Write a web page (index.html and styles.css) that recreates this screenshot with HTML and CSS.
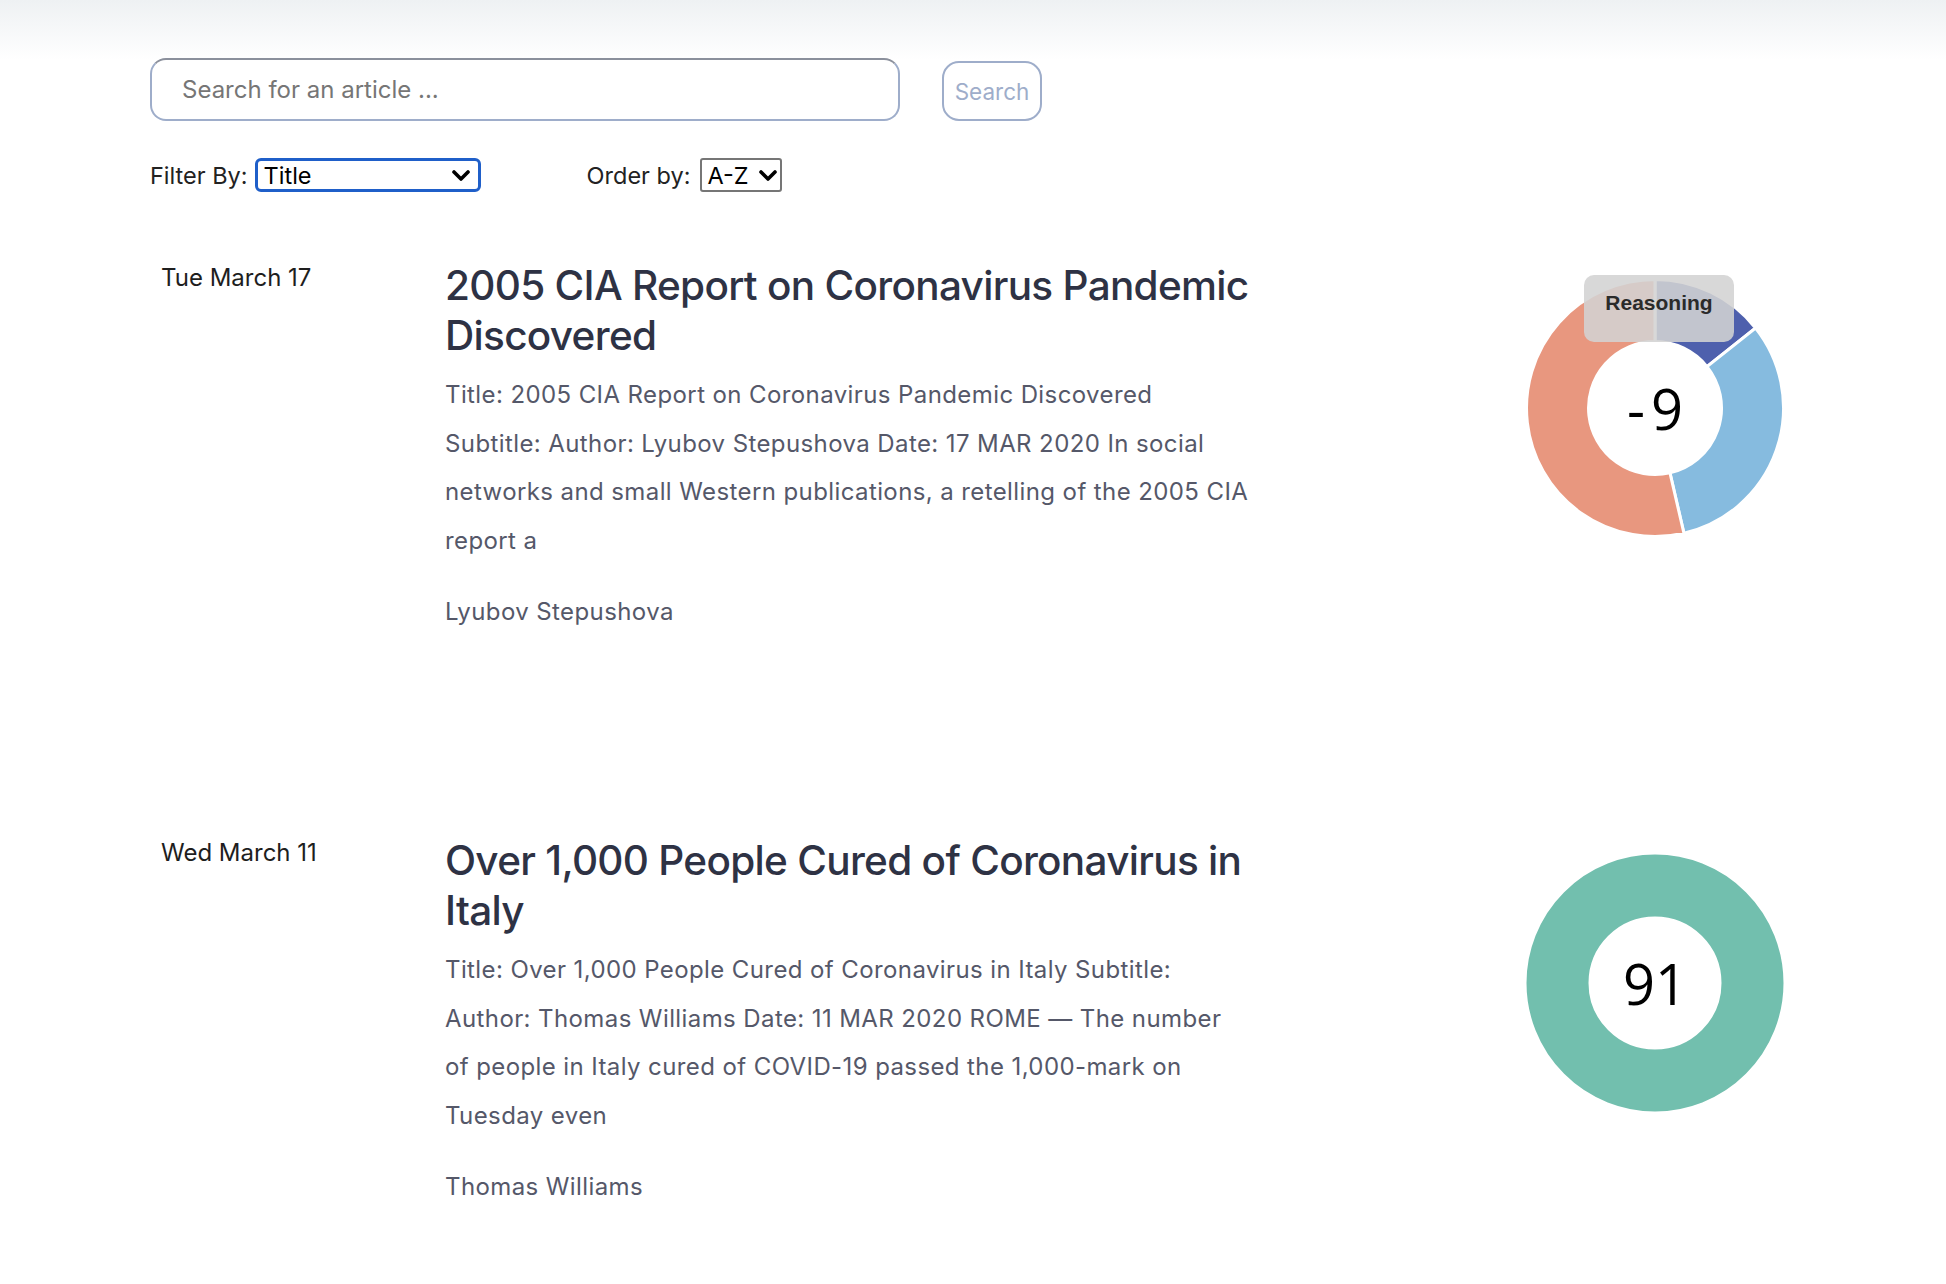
FILE: index.html
```html
<!DOCTYPE html>
<html lang="en">
<head>
<meta charset="utf-8">
<title>Articles</title>
<link rel="stylesheet" href="styles.css">
</head>
<body>
<div class="page">
  <div class="search-row">
    <input class="search-input" type="text" placeholder="Search for an article ...">
    <button class="search-btn">Search</button>
  </div>
  <div class="filter-row">
    <span class="filter-label">Filter By:</span>
    <div class="select select-filter">
      <span class="select-text">Title</span>
      <svg class="chev" width="18" height="11" viewBox="0 0 18 11"><path d="M2 2 L9 9 L16 2" fill="none" stroke="#000" stroke-width="3.6" stroke-linecap="round" stroke-linejoin="round"/></svg>
    </div>
    <span class="filter-label order-label">Order by:</span>
    <div class="select select-order">
      <span class="select-text">A-Z</span>
      <svg class="chev" width="18" height="11" viewBox="0 0 18 11"><path d="M2 2 L9 9 L16 2" fill="none" stroke="#000" stroke-width="3.6" stroke-linecap="round" stroke-linejoin="round"/></svg>
    </div>
  </div>

  <div class="articles">
    <article class="article">
      <div class="date">Tue March 17</div>
      <div class="body">
        <h2 class="title">2005 CIA Report on Coronavirus Pandemic Discovered</h2>
        <p class="desc">Title: 2005 CIA Report on Coronavirus Pandemic Discovered Subtitle: Author: Lyubov Stepushova Date: 17 MAR 2020 In social networks and small Western publications, a retelling of the 2005 CIA report a</p>
        <p class="author">Lyubov Stepushova</p>
      </div>
      <div class="chart">
        <svg class="donut" width="260" height="260" viewBox="0 0 260 260">
          <path d="M130,1.5 A128.5,128.5 0 0 1 230.56,50.01 L182.04,88.6 A66.5,66.5 0 0 0 130,63.5 Z" fill="#4e60ad" stroke="#fff" stroke-width="3"/>
          <path d="M230.56,50.01 A128.5,128.5 0 0 1 158.91,255.21 L144.96,194.8 A66.5,66.5 0 0 0 182.04,88.6 Z" fill="#86bbdf" stroke="#fff" stroke-width="3"/>
          <path d="M158.91,255.21 A128.5,128.5 0 1 1 130,1.5 L130,63.5 A66.5,66.5 0 1 0 144.96,194.8 Z" fill="#e8977f" stroke="#fff" stroke-width="3"/>
        </svg>
        <div class="score"><span class="minus">-</span>9</div>
        <div class="tooltip">Reasoning</div>
      </div>
    </article>

    <article class="article">
      <div class="date">Wed March 11</div>
      <div class="body">
        <h2 class="title">Over 1,000 People Cured of Coronavirus in Italy</h2>
        <p class="desc">Title: Over 1,000 People Cured of Coronavirus in Italy Subtitle: Author: Thomas Williams Date: 11 MAR 2020 ROME — The number of people in Italy cured of COVID-19 passed the 1,000-mark on Tuesday even</p>
        <p class="author">Thomas Williams</p>
      </div>
      <div class="chart">
        <svg class="donut" width="260" height="260" viewBox="0 0 260 260">
          <circle cx="130" cy="130" r="97.5" fill="none" stroke="#72bfae" stroke-width="62"/>
        </svg>
        <div class="score">91</div>
      </div>
    </article>
  </div>
</div>
</body>
</html>
```

FILE: styles.css
```css
html, body {
  margin: 0;
  padding: 0;
}
body {
  background: linear-gradient(to bottom, #eef1f3 0px, #ffffff 60px) no-repeat, #ffffff;
  font-family: Inter, "Liberation Sans", sans-serif;
  color: #222;
}
.page {
  padding: 58px 0 0 150px;
}
.search-row {
  display: flex;
  align-items: flex-start;
  gap: 42px;
}
.search-input {
  box-sizing: border-box;
  width: 750px;
  height: 63px;
  border: 2px solid #9eadca;
  border-top-color: #8b909c;
  border-radius: 16px;
  padding: 0 0 0 30px;
  font-family: Inter, "Liberation Sans", sans-serif;
  font-size: 24px;
  color: #333;
  background: #fff;
  outline: none;
}
.search-input::placeholder {
  color: #767676;
}
.search-btn {
  box-sizing: border-box;
  margin-top: 3px;
  width: 100px;
  height: 60px;
  border: 2px solid #9eadca;
  border-radius: 17px;
  background: #fff;
  color: #9eadca;
  font-family: Inter, "Liberation Sans", sans-serif;
  font-size: 22.5px;
  padding: 0;
}
.filter-row {
  display: flex;
  align-items: center;
  margin-top: 37px;
  height: 34px;
}
.filter-label {
  font-size: 23.5px;
  color: #222;
  margin-right: 7px;
}
.order-label {
  margin-left: 106px;
  margin-right: 10px;
}
.select {
  box-sizing: border-box;
  height: 34px;
  display: flex;
  align-items: center;
  justify-content: space-between;
  background: #fff;
}
.select-text {
  font-size: 23.5px;
  color: #000;
}
.select-filter {
  width: 226px;
  border: 3px solid #1f5fc9;
  border-radius: 6px;
  padding: 0 8px 0 6px;
}
.select-order {
  width: 82px;
  border: 2px solid #767676;
  border-radius: 3px;
  padding: 0 3px 0 5px;
}
.chev {
  display: block;
}
.articles {
  margin-top: 67px;
}
.article {
  display: grid;
  grid-template-columns: 295px 805px 275px 260px;
  align-items: start;
  height: 575px;
}
.article:last-child {
  height: auto;
}
.date {
  padding-left: 11px;
  margin-top: 4px;
  font-size: 24px;
  line-height: 30px;
  color: #1e1e1e;
}
.title {
  margin: 2px 0 0 0;
  font-size: 40.5px;
  line-height: 50px;
  font-weight: 500;
  color: #2e3244;
  letter-spacing: -0.7px;
}
.desc {
  margin: 10px 0 0 0;
  font-size: 24px;
  line-height: 48.5px;
  color: #555869;
  letter-spacing: 0.4px;
}
.author {
  margin: 23px 0 0 0;
  font-size: 24px;
  line-height: 48px;
  color: #555869;
  letter-spacing: 0.4px;
}
.chart {
  grid-column: 4;
  position: relative;
  width: 260px;
  height: 260px;
  margin-top: 19px;
}
.donut {
  display: block;
}
.score {
  position: absolute;
  left: 0;
  top: 0;
  width: 260px;
  height: 260px;
  display: flex;
  align-items: center;
  justify-content: center;
  font-family: "Open Sans", "Noto Sans", sans-serif;
  font-size: 56px;
  color: #000;
}
.minus {
  margin-right: 6px;
}
.tooltip {
  position: absolute;
  left: 59px;
  top: -3px;
  width: 150px;
  height: 67px;
  box-sizing: border-box;
  border-radius: 10px;
  background: rgba(211, 211, 211, 0.88);
  font-family: "Liberation Sans", Arial, sans-serif;
  font-weight: bold;
  font-size: 21px;
  color: #2b2b2b;
  text-align: center;
  padding-top: 16px;
}
```
